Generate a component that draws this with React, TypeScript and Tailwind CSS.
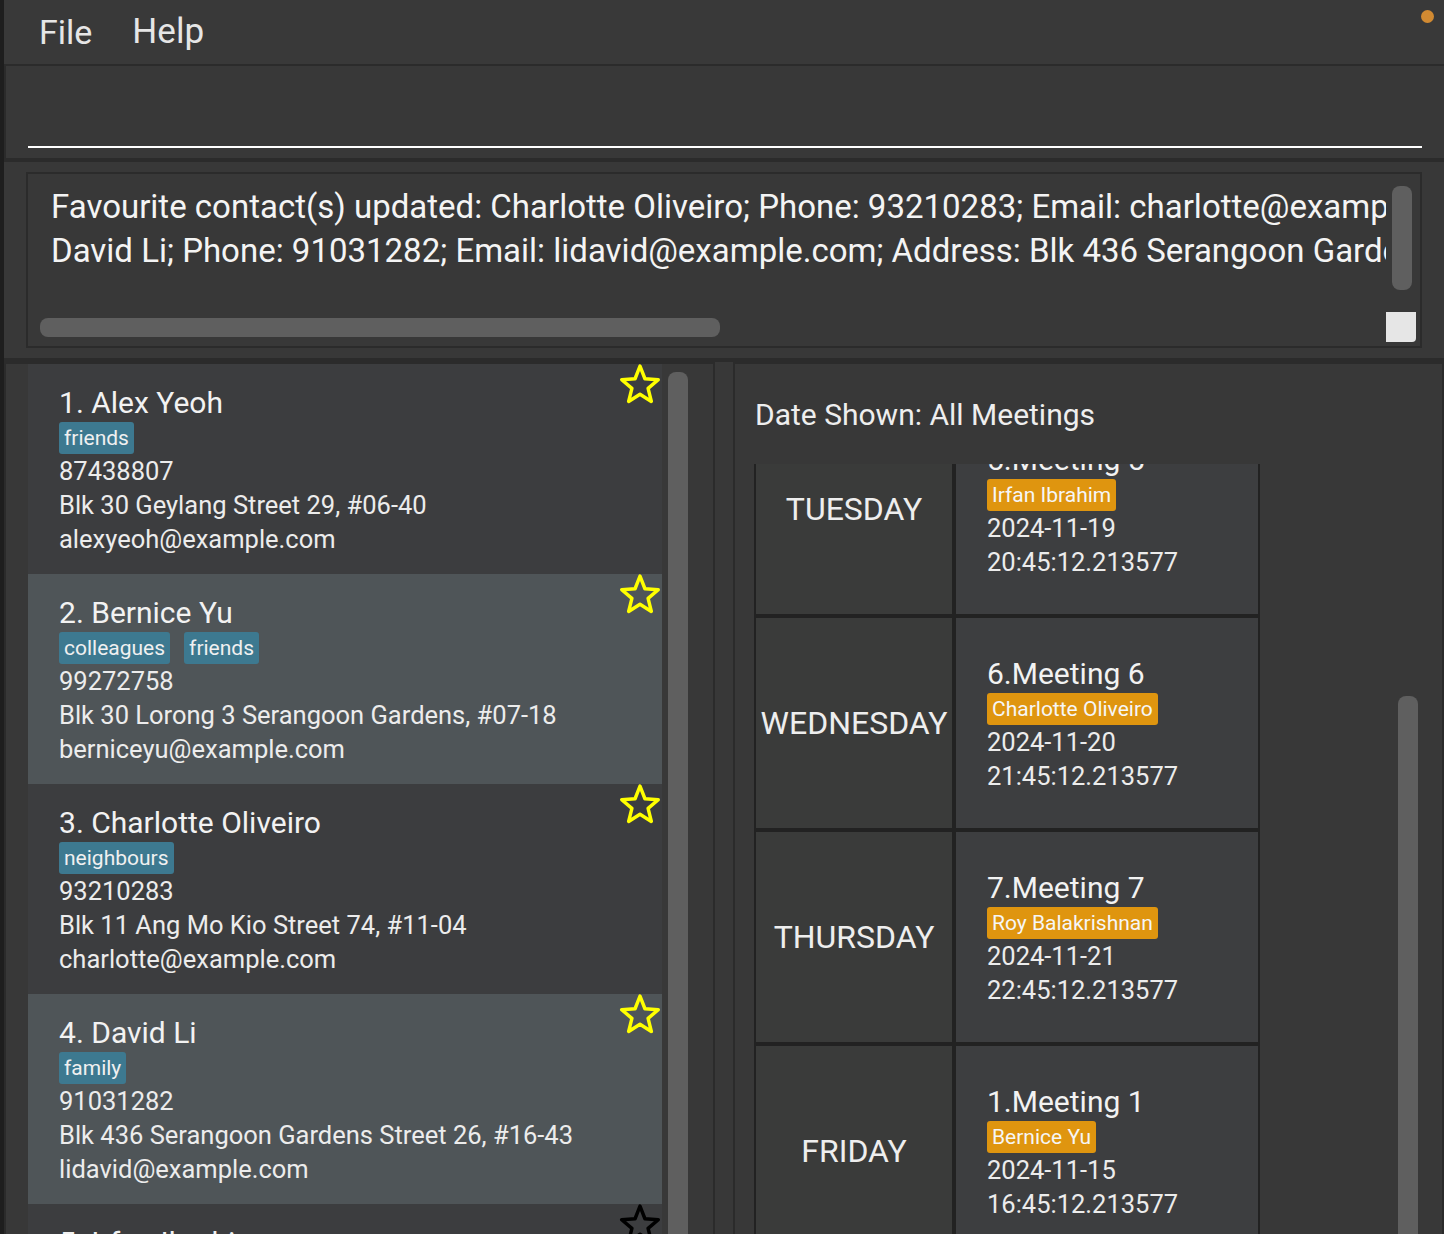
import React from "react";

const persons = [
  { idx: 1, name: "Alex Yeoh", tags: ["friends"], phone: "87438807", address: "Blk 30 Geylang Street 29, #06-40", email: "alexyeoh@example.com", fav: true },
  { idx: 2, name: "Bernice Yu", tags: ["colleagues", "friends"], phone: "99272758", address: "Blk 30 Lorong 3 Serangoon Gardens, #07-18", email: "berniceyu@example.com", fav: true },
  { idx: 3, name: "Charlotte Oliveiro", tags: ["neighbours"], phone: "93210283", address: "Blk 11 Ang Mo Kio Street 74, #11-04", email: "charlotte@example.com", fav: true },
  { idx: 4, name: "David Li", tags: ["family"], phone: "91031282", address: "Blk 436 Serangoon Gardens Street 26, #16-43", email: "lidavid@example.com", fav: true },
  { idx: 5, name: "Irfan Ibrahim", tags: ["classmates"], phone: "92492021", address: "Blk 47 Tampines Street 20, #17-35", email: "irfan@example.com", fav: false },
];

const meetings = [
  { day: "TUESDAY", title: "5.Meeting 5", who: "Irfan Ibrahim", date: "2024-11-19", time: "20:45:12.213577" },
  { day: "WEDNESDAY", title: "6.Meeting 6", who: "Charlotte Oliveiro", date: "2024-11-20", time: "21:45:12.213577" },
  { day: "THURSDAY", title: "7.Meeting 7", who: "Roy Balakrishnan", date: "2024-11-21", time: "22:45:12.213577" },
  { day: "FRIDAY", title: "1.Meeting 1", who: "Bernice Yu", date: "2024-11-15", time: "16:45:12.213577" },
];

function Star({ fav }: { fav: boolean }) {
  return (
    <svg width="42" height="42" viewBox="0 0 40 40" className="absolute right-[1px] top-[-1px]">
      <polygon
        points="20,3 24.7,15 37.4,15.9 27.7,24.2 30.8,36.6 20,29.8 9.2,36.6 12.3,24.2 2.6,15.9 15.3,15"
        fill="none"
        stroke={fav ? "#ffff00" : "#000000"}
        strokeWidth="3.3"
        strokeLinejoin="round"
      />
    </svg>
  );
}

function PersonCard({ p, light }: { p: (typeof persons)[number]; light: boolean }) {
  return (
    <div className={`relative h-[210px] shrink-0 pl-[31px] pt-[22px] ${light ? "bg-[#4f5558]" : "bg-[#3c3d3f]"}`}>
      <Star fav={p.fav} />
      <div className="text-[30px] leading-[34px] text-[#f2f2f2]">
        {p.idx}. {p.name}
      </div>
      <div className="mt-[2px] flex gap-[14px]">
        {p.tags.map((t) => (
          <span key={t} className="h-[32px] rounded-[3px] bg-[#3d7990] px-[5px] text-[21px] leading-[32px] text-[#f0f0f0]">
            {t}
          </span>
        ))}
      </div>
      <div className="text-[25.5px] leading-[34px] text-[#ececec]">{p.phone}</div>
      <div className="text-[25.5px] leading-[34px] text-[#ececec]">{p.address}</div>
      <div className="text-[25.5px] leading-[34px] text-[#ececec]">{p.email}</div>
    </div>
  );
}

export default function App() {
  return (
    <div className="flex h-[1234px] w-[1444px] flex-col overflow-hidden border-l-4 border-[#1e1e1e] bg-[#2b2b2b] font-[Roboto,sans-serif]">
      {/* menu */}
      <div className="relative flex h-[64px] shrink-0 items-center gap-[40px] bg-[#393939] pl-[35px] text-[34px] text-[#e6e6e6]">
        <span>File</span>
        <span className="text-[35px]">Help</span>
        <div className="absolute right-[10px] top-[10px] h-[13px] w-[13px] rounded-full bg-[#d18a32]" />
      </div>

      {/* command box */}
      <div className="mt-[2px] flex h-[92px] shrink-0 items-end border-l-2 border-[#2b2b2b] bg-[#383838] pb-[10px] pl-[22px] pr-[22px]">
        <div className="h-[2px] w-full bg-white" />
      </div>

      {/* result box */}
      <div className="mt-[4px] h-[196px] shrink-0 bg-[#383838] pl-[22px] pr-[22px] pt-[10px]">
        <div className="flex h-[176px] flex-col border-2 border-[#2b2b2b]">
          <div className="flex h-[138px]">
            <div className="flex-1 overflow-hidden whitespace-nowrap pl-[23px] pt-[11px] text-[33px] leading-[44px] text-[#f4f4f4]">
              <div>Favourite contact(s) updated: Charlotte Oliveiro; Phone: 93210283; Email: charlotte@example.com; Address: Blk 11 Ang Mo Kio Street 74, #11-04</div>
              <div>David Li; Phone: 91031282; Email: lidavid@example.com; Address: Blk 436 Serangoon Gardens Street 26, #16-43</div>
            </div>
            <div className="w-[34px] shrink-0 pl-[6px] pt-[12px]">
              <div className="h-[104px] w-[20px] rounded-[8px] bg-[#5f5f5f]" />
            </div>
          </div>
          <div className="flex h-[34px]">
            <div className="flex-1 pl-[12px] pt-[6px]">
              <div className="h-[19px] w-[680px] rounded-[8px] bg-[#5f5f5f]" />
            </div>
            <div className="mr-[4px] h-[30px] w-[30px] shrink-0 rounded-br-[4px] bg-[#e6e6e6]" />
          </div>
        </div>
      </div>

      {/* bottom */}
      <div className="mt-[4px] flex flex-1 gap-[18px] overflow-hidden bg-[#383838]">
        {/* person list */}
        <div className="flex w-[711px] shrink-0 border-2 border-b-0 border-[#2b2b2b] pl-[22px]">
          <div className="flex w-[634px] shrink-0 flex-col">
            {persons.map((p, i) => (
              <PersonCard key={p.idx} p={p} light={i % 2 === 1} />
            ))}
          </div>
          <div className="ml-[6px] mt-[8px] w-[20px] rounded-t-[8px] bg-[#5f5f5f]" />
        </div>

        {/* meetings */}
        <div className="flex flex-1 border-2 border-b-0 border-[#2b2b2b]">
          <div className="flex flex-1 flex-col pl-[19px] pt-[33px]">
            <div className="pl-[1px] text-[30px] leading-[36px] text-[#eeeeee]">Date Shown: All Meetings</div>
            <div className="mt-[31px] flex-1 overflow-hidden">
              <div className="-mt-[60px] grid w-[506px] grid-cols-[196px_302px] gap-[4px] bg-[#222222] px-[2px]">
                {meetings.map((m) => (
                  <React.Fragment key={m.title}>
                    <div className="flex h-[210px] items-center justify-center bg-[#3a3b3a] text-[32px] text-[#eeeeee]">
                      {m.day}
                    </div>
                    <div className="flex h-[210px] flex-col justify-center bg-[#3d3e40] pl-[31px] pt-[4px]">
                      <div className="text-[30px] leading-[34px] text-[#f2f2f2]">{m.title}</div>
                      <div className="mt-[2px] flex">
                        <span className="h-[32px] rounded-[3px] bg-[#df950f] px-[5px] text-[21px] leading-[32px] text-[#f6f6f6]">
                          {m.who}
                        </span>
                      </div>
                      <div className="text-[25.5px] leading-[34px] text-[#ececec]">{m.date}</div>
                      <div className="text-[25.5px] leading-[34px] text-[#ececec]">{m.time}</div>
                    </div>
                  </React.Fragment>
                ))}
              </div>
            </div>
          </div>
          <div className="w-[44px] shrink-0 pt-[332px]">
            <div className="h-full w-[20px] rounded-t-[8px] bg-[#5f5f5f]" />
          </div>
        </div>
      </div>
    </div>
  );
}
